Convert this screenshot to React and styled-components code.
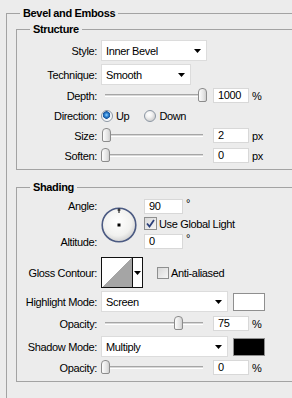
import React from 'react';
import styled, { createGlobalStyle } from 'styled-components';

const GlobalStyle = createGlobalStyle`
  html, body {
    margin: 0;
    padding: 0;
    background: #ececec;
    overflow: hidden;
  }
  body {
    font-family: "Liberation Sans", Arial, sans-serif;
    font-size: 11px;
    letter-spacing: -0.35px;
    color: #000;
  }
`;

const Panel = styled.div`
  width: 292px;
  height: 398px;
  overflow: hidden;
  padding-top: 6px;
  box-sizing: border-box;
`;

const Group = styled.fieldset`
  margin: ${p => p.$top}px -40px 0 ${p => p.$left}px;
  padding: ${p => p.$pt || 0}px 0 ${p => p.$bottom}px 0;
  border: 1px solid #a3a3a3;
  min-width: 0;
`;

const Legend = styled.legend`
  margin-left: 13px;
  padding: 0 3px;
  font-weight: bold;
  line-height: 14px;
`;

const Row = styled.div`
  display: flex;
  align-items: center;
  height: ${p => p.$h}px;
  margin-top: ${p => p.$mt || 0}px;
`;

const Label = styled.div`
  flex: none;
  width: 80px;
  margin-right: 4px;
  text-align: right;
  white-space: nowrap;
`;

const Select = styled.div`
  flex: none;
  width: ${p => p.$w}px;
  height: 21px;
  box-sizing: border-box;
  background: #fff;
  border: 1px solid #dcdcdc;
  display: flex;
  align-items: center;
  justify-content: space-between;
  padding: 0 5px 0 4px;
`;

const Arrow = () => (
  <svg width="7" height="4" viewBox="0 0 7 4">
    <polygon points="0,0 7,0 3.5,4" fill="#000" />
  </svg>
);

const Slider = styled.div`
  flex: none;
  position: relative;
  width: 106px;
  height: 15px;
  display: flex;
  align-items: center;
  padding: 0 4px;
  box-sizing: border-box;
`;

const Track = styled.div`
  flex: 1;
  height: 3px;
  box-sizing: border-box;
  border-top: 1px solid #a6a6a6;
  border-bottom: 1px solid #fff;
  background: #d8d8d8;
`;

const Thumb = styled.div`
  position: absolute;
  top: 0;
  width: 9px;
  height: 14px;
  box-sizing: border-box;
  border: 1px solid #8c8c8c;
  border-radius: 4px 4px 2px 2px;
  background: linear-gradient(to right, #fdfdfd, #e2e2e2 70%, #cfcfcf);
`;

const Field = styled.div`
  flex: none;
  width: ${p => p.$w || 36}px;
  height: 15px;
  box-sizing: border-box;
  background: #fff;
  border: 1px solid #d8d8d8;
  padding-left: 4px;
  line-height: 13px;
  margin-left: ${p => p.$ml || 0}px;
`;

const Unit = styled.span`
  margin-left: 3px;
  align-self: ${p => (p.$sup ? 'flex-start' : 'center')};
  line-height: ${p => (p.$sup ? '9px' : 'normal')};
`;

const Radio = styled.span`
  flex: none;
  width: 12px;
  height: 12px;
  box-sizing: border-box;
  border-radius: 50%;
  border: 1px solid #8b96a3;
  background: ${p =>
    p.$on
      ? 'radial-gradient(circle at 45% 40%, #8fd0ff 0, #2a7fd0 2px, #18539a 3.5px, #e8eef4 4px, #fff 6px)'
      : 'radial-gradient(circle at 40% 35%, #fff 0, #f2f2f2 3px, #d6d6d6 6px)'};
  margin-right: 3px;
`;

const Option = styled.span`
  margin-right: ${p => p.$mr || 0}px;
`;

const Box = styled.span`
  flex: none;
  width: ${p => p.$s}px;
  height: ${p => p.$s}px;
  box-sizing: border-box;
  border: 1px solid #8e8f8f;
  background: linear-gradient(135deg, #d8d8d8, #f6f6f6);
  display: flex;
  align-items: center;
  justify-content: center;
  margin-left: ${p => p.$ml || 0}px;
  margin-right: 2px;
`;

const Check = ({ checked, size, ml, children }) => (
  <Row $h={13}>
    <Box $s={size} $ml={ml}>
      {checked && (
        <svg width="9" height="9" viewBox="0 0 9 9">
          <path d="M1 4.5 L3.5 7.5 L8 1" stroke="#2a3f7a" strokeWidth="1.8" fill="none" />
        </svg>
      )}
    </Box>
    <span>{children}</span>
  </Row>
);

const AngleBlock = styled.div`
  display: flex;
  height: 51px;
  margin-top: 5px;
`;

const LabelCol = styled.div`
  flex: none;
  width: 80px;
  margin-right: 4px;
  display: flex;
  flex-direction: column;
  justify-content: space-between;
  align-items: flex-end;
  line-height: 15px;
`;

const Dial = styled.div`
  flex: none;
  width: 36px;
  height: 36px;
  margin: 8px 7px 0 0;
`;

const FieldCol = styled.div`
  display: flex;
  flex-direction: column;
  gap: 3px;
`;

const Contour = styled.div`
  flex: none;
  display: flex;
  width: 42px;
  height: 31px;
  box-sizing: border-box;
  border: 1px solid #111;
  background: #fff;
`;

const ContourGraph = styled.div`
  flex: none;
  width: 30px;
  height: 29px;
  border-right: 1px solid #111;
  background: linear-gradient(to top left, #a5a5a5 50%, #fff 50%);
`;

const ContourArrow = styled.div`
  flex: 1;
  display: flex;
  align-items: center;
  justify-content: center;
`;

const Swatch = styled.div`
  flex: none;
  width: 32px;
  height: 18px;
  box-sizing: border-box;
  margin-left: 5px;
  border: 1px solid #8f8f8f;
  background: ${p => p.$color};
`;

const SliderField = ({ label, value, max, unit, mt }) => (
  <Row $h={15} $mt={mt}>
    <Label>{label}</Label>
    <Slider>
      <Track />
      <Thumb style={{ left: (value / max) * 97 }} />
    </Slider>
    <Field $ml={6}>{value}</Field>
    <Unit>{unit}</Unit>
  </Row>
);

export default function App() {
  return (
    <Panel>
      <GlobalStyle />
      <Group $top={0} $left={6} $bottom={40}>
        <Legend>Bevel and Emboss</Legend>

        <Group $top={2} $left={9} $pt={4} $bottom={6}>
          <Legend>Structure</Legend>
          <Row $h={21}>
            <Label>Style:</Label>
            <Select $w={106}>
              <span>Inner Bevel</span>
              <Arrow />
            </Select>
          </Row>
          <Row $h={21} $mt={3}>
            <Label>Technique:</Label>
            <Select $w={90}>
              <span>Smooth</span>
              <Arrow />
            </Select>
          </Row>
          <SliderField label="Depth:" value={1000} max={1000} unit="%" mt={3} />
          <Row $h={15} $mt={5}>
            <Label>Direction:</Label>
            <Radio $on />
            <Option $mr={15}>Up</Option>
            <Radio />
            <Option>Down</Option>
          </Row>
          <SliderField label="Size:" value={2} max={250} unit="px" mt={5} />
          <SliderField label="Soften:" value={0} max={16} unit="px" mt={5} />
        </Group>

        <Group $top={10} $left={9} $bottom={6}>
          <Legend>Shading</Legend>
          <AngleBlock>
            <LabelCol>
              <span>Angle:</span>
              <span>Altitude:</span>
            </LabelCol>
            <Dial>
              <svg width="36" height="36" viewBox="0 0 36 36">
                <defs>
                  <radialGradient id="dialFill" cx="45%" cy="40%" r="60%">
                    <stop offset="0%" stopColor="#ffffff" />
                    <stop offset="70%" stopColor="#f1f1ef" />
                    <stop offset="100%" stopColor="#d2d2d2" />
                  </radialGradient>
                </defs>
                <circle cx="18" cy="18" r="16.8" fill="url(#dialFill)" stroke="#4b5a82" strokeWidth="1.6" />
                <rect x="16.5" y="16.5" width="3" height="3" fill="#000" />
                <line x1="18" y1="1.5" x2="18" y2="6" stroke="#000" strokeWidth="1" />
                <line x1="16.5" y1="3" x2="19.5" y2="3" stroke="#000" strokeWidth="1" />
              </svg>
            </Dial>
            <FieldCol>
              <Row $h={15}>
                <Field $w={39}>90</Field>
                <Unit $sup>°</Unit>
              </Row>
              <Check checked size={13}>Use Global Light</Check>
              <Row $h={15} $mt={1}>
                <Field $w={39}>0</Field>
                <Unit $sup>°</Unit>
              </Row>
            </FieldCol>
          </AngleBlock>

          <Row $h={31} $mt={7}>
            <Label>Gloss Contour:</Label>
            <Contour>
              <ContourGraph />
              <ContourArrow>
                <Arrow />
              </ContourArrow>
            </Contour>
            <Check size={12} ml={14}>Anti-aliased</Check>
          </Row>

          <Row $h={21} $mt={3}>
            <Label>Highlight Mode:</Label>
            <Select $w={127}>
              <span>Screen</span>
              <Arrow />
            </Select>
            <Swatch $color="#fff" />
          </Row>
          <SliderField label="Opacity:" value={75} max={100} unit="%" mt={4} />
          <Row $h={21} $mt={5}>
            <Label>Shadow Mode:</Label>
            <Select $w={127}>
              <span>Multiply</span>
              <Arrow />
            </Select>
            <Swatch $color="#000" />
          </Row>
          <SliderField label="Opacity:" value={0} max={100} unit="%" mt={3} />
        </Group>
      </Group>
    </Panel>
  );
}
